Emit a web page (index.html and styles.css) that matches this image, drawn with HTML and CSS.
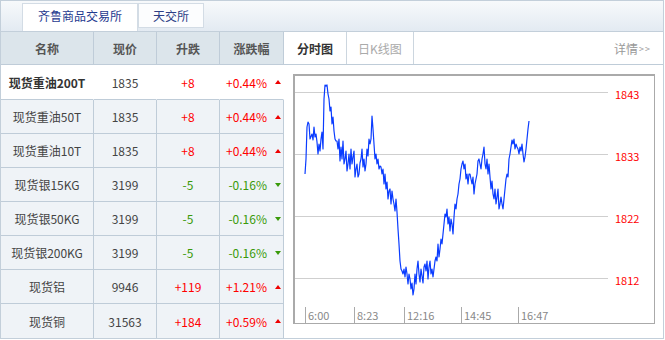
FILE: index.html
```html
<!DOCTYPE html>
<html lang="zh-CN">
<head>
    <meta charset="UTF-8">
    <title>行情</title>
    <link rel="stylesheet" href="styles.css">
</head>
<body>
    <div class="quote-box">
        <div class="tabbar">
            <span class="tab active">齐鲁商品交易所</span>
            <span class="tab">天交所</span>
        </div>
        <div class="quote-body">
            <div class="quote-table">
                <div class="cell head">名称</div>
                <div class="cell head">现价</div>
                <div class="cell head">升跌</div>
                <div class="cell head">涨跌幅</div>

                <div class="cell name sel">现货重油200T</div>
                <div class="cell sel">1835</div>
                <div class="cell sel up">+8</div>
                <div class="cell sel pct up">+0.44%<i class="arrow"></i></div>

                <div class="cell name">现货重油50T</div>
                <div class="cell">1835</div>
                <div class="cell up">+8</div>
                <div class="cell pct up">+0.44%<i class="arrow"></i></div>

                <div class="cell name">现货重油10T</div>
                <div class="cell">1835</div>
                <div class="cell up">+8</div>
                <div class="cell pct up">+0.44%<i class="arrow"></i></div>

                <div class="cell name">现货银15KG</div>
                <div class="cell">3199</div>
                <div class="cell down">-5</div>
                <div class="cell pct down">-0.16%<i class="arrow"></i></div>

                <div class="cell name">现货银50KG</div>
                <div class="cell">3199</div>
                <div class="cell down">-5</div>
                <div class="cell pct down">-0.16%<i class="arrow"></i></div>

                <div class="cell name">现货银200KG</div>
                <div class="cell">3199</div>
                <div class="cell down">-5</div>
                <div class="cell pct down">-0.16%<i class="arrow"></i></div>

                <div class="cell name">现货铝</div>
                <div class="cell">9946</div>
                <div class="cell up">+119</div>
                <div class="cell pct up">+1.21%<i class="arrow"></i></div>

                <div class="cell name last">现货铜</div>
                <div class="cell last">31563</div>
                <div class="cell last up">+184</div>
                <div class="cell last pct up">+0.59%<i class="arrow"></i></div>
            </div>

            <div class="chart-panel">
                <div class="chart-tabs">
                    <span class="ctab active">分时图</span>
                    <span class="ctab">日K线图</span>
                    <a class="more">详情<small>&gt;&gt;</small></a>
                </div>
                <div class="chart-frame">
                    <svg width="359" height="247" viewBox="295 77 359 247">
                        <g class="grid">
                            <line x1="295" y1="93.5" x2="608" y2="93.5"/>
                            <line x1="295" y1="155.5" x2="608" y2="155.5"/>
                            <line x1="295" y1="217.5" x2="608" y2="217.5"/>
                            <line x1="295" y1="279.5" x2="608" y2="279.5"/>
                        </g>
                        <g class="price">
                            <text x="615" y="100">1843</text>
                            <text x="615" y="162">1833</text>
                            <text x="615" y="224">1822</text>
                            <text x="615" y="286">1812</text>
                        </g>
                        <g class="ticks">
                            <line x1="305.5" y1="308" x2="305.5" y2="324"/>
                            <line x1="354.5" y1="308" x2="354.5" y2="324"/>
                            <line x1="404.5" y1="308" x2="404.5" y2="324"/>
                            <line x1="461.5" y1="308" x2="461.5" y2="324"/>
                            <line x1="518.5" y1="308" x2="518.5" y2="324"/>
                        </g>
                        <g class="times">
                            <text x="308" y="321">6:00</text>
                            <text x="357" y="321">8:23</text>
                            <text x="407" y="321">12:16</text>
                            <text x="464" y="321">14:45</text>
                            <text x="521" y="321">16:47</text>
                        </g>
                        <polyline class="trend" points="305,175 306,160 307,128 308,123 309,125 310,140 312,135 313,141 314,128 315,138 316,135 317,143 318,155 319,145 320,152 321,140 322,133 323,150 324,100 325,86 326,87 327,86 328,95 329,100 330,112 331,108 332,125 333,118 334,132 335,140 336,142 337,142 338,150 339,140 340,162 341,148 342,160 343,142 344,165 345,160 346,152 347,172 348,165 349,155 350,170 351,150 352,165 353,158 354,152 355,178 356,170 357,165 358,178 359,175 360,164 361,160 362,150 363,168 364,160 365,172 366,165 367,150 368,157 369,140 370,145 371,140 372,117 373,130 374,145 375,160 376,155 377,165 378,160 379,170 380,167 381,168 382,175 383,170 384,185 385,175 386,190 387,183 388,200 389,192 390,190 391,205 392,192 393,200 394,205 395,212 396,200 397,213 398,230 399,245 400,262 401,270 402,272 403,275 404,270 405,278 406,268 407,275 408,285 409,275 410,280 411,290 412,284 413,296 414,290 415,275 416,285 417,270 418,262 419,275 420,283 421,270 422,277 423,284 424,268 425,265 426,272 427,262 428,280 429,268 430,262 431,275 432,270 433,278 434,270 435,262 436,258 437,262 438,245 439,258 440,250 441,240 442,245 443,235 444,225 445,215 446,218 447,210 448,225 449,218 450,232 451,220 452,225 453,235 454,218 455,205 456,210 457,200 458,195 459,185 460,180 461,170 462,165 463,162 464,170 465,165 466,180 467,175 468,185 469,175 470,175 471,180 472,185 473,178 474,195 475,185 476,180 477,175 478,162 479,160 480,165 481,170 482,160 483,155 484,148 485,165 486,170 487,160 488,175 489,165 490,178 491,190 492,182 493,195 494,200 495,190 496,205 497,198 498,190 499,210 500,205 501,198 502,205 503,210 504,200 505,190 506,180 507,175 508,178 509,160 510,155 511,148 512,141 513,145 514,140 515,150 516,145 517,148 518,150 519,155 520,148 521,152 522,145 523,155 524,163 525,158 526,150 527,140 528,130 529,122"/>
                    </svg>
                </div>
            </div>
        </div>
    </div>
</body>
</html>
```

FILE: styles.css
```css
body {
    margin: 0;
    background: #fff;
    font-family: "Microsoft YaHei", "Noto Sans CJK SC", sans-serif;
    font-size: 12px;
    color: #444;
}
.quote-box {
    width: 662px;
    height: 337px;
    border: 1px solid #c3cfda;
    overflow: hidden;
}
.tabbar {
    height: 31px;
    border-bottom: 1px solid #c3cfda;
    background: linear-gradient(#f7f9fb, #e3eaf2);
    display: flex;
    align-items: flex-start;
    padding: 2px 0 0 21px;
    box-sizing: border-box;
}
.tab {
    height: 25px;
    line-height: 24px;
    padding: 0;
    text-align: center;
    background: #fcfdfe;
    border: 1px solid #d3dce5;
    color: #2d3f86;
    font-size: 12px;
    box-sizing: border-box;
    width: 66px;
}
.tab.active {
    width: 116px;
    height: 28px;
    background: #fff;
    border-bottom: none;
    color: #1f3a8f;
}
.quote-body {
    display: flex;
}
.quote-table {
    display: grid;
    grid-template-columns: 93px 63px 63px 64px;
    grid-auto-rows: 34px;
    grid-template-rows: 33px 35px;
    width: 283px;
}
.cell {
    box-sizing: border-box;
    border-right: 1px solid #bfccd8;
    border-bottom: 1px solid #bfccd8;
    background: #eff3f7;
    display: flex;
    align-items: center;
    justify-content: center;
    color: #444;
    white-space: nowrap;
}
.cell.head {
    background: #dce5eb;
    color: #555;
    font-weight: bold;
}
.cell.sel {
    background: #fff;
    border-right-color: #fff;
}
.cell.name.sel {
    font-weight: bold;
    color: #333;
}
.cell.last {
    border-bottom: none;
}
.cell.up {
    color: #f00;
}
.cell.down {
    color: #3a9a0a;
}
.cell.pct {
    justify-content: flex-end;
    padding-right: 2px;
}
.arrow {
    display: inline-block;
    width: 0;
    height: 0;
    margin-left: 8px;
    border-left: 3px solid transparent;
    border-right: 3px solid transparent;
}
.up .arrow {
    border-bottom: 4px solid #e00;
}
.down .arrow {
    border-top: 4px solid #3a9a0a;
}
.chart-panel {
    flex: 1;
    background: #fff;
}
.chart-tabs {
    height: 33px;
    box-sizing: border-box;
    border-bottom: 1px solid #bfccd8;
    display: flex;
    align-items: stretch;
}
.ctab {
    display: flex;
    align-items: center;
    justify-content: center;
    border-right: 1px solid #ccd6df;
    color: #aaa;
    width: 67px;
    box-sizing: border-box;
}
.ctab.active {
    width: 63px;
    color: #333;
    font-weight: bold;
}
.more {
    margin-left: auto;
    padding-right: 12px;
    display: flex;
    align-items: center;
    color: #999;
}
.more small {
    font-size: 9px;
    margin-left: 1px;
    letter-spacing: 1px;
}
.chart-frame {
    width: 362px;
    height: 250px;
    box-sizing: border-box;
    margin: 9px 0 0 9px;
    border: 1px solid #aaa;
    border-top-width: 2px;
    border-left-width: 2px;
}
.chart-frame svg {
    display: block;
}
.grid line {
    stroke: #cfcfcf;
    stroke-width: 1;
}
.ticks line {
    stroke: #aaa;
    stroke-width: 1;
}
.price text {
    fill: #f00;
    font-size: 11px;
    font-family: "Microsoft YaHei", "Noto Sans CJK SC", sans-serif;
}
.times text {
    fill: #888;
    font-size: 11px;
    font-family: "Microsoft YaHei", "Noto Sans CJK SC", sans-serif;
}
.trend {
    fill: none;
    stroke: #0a3cff;
    stroke-width: 1.2;
    stroke-linejoin: round;
}
```
